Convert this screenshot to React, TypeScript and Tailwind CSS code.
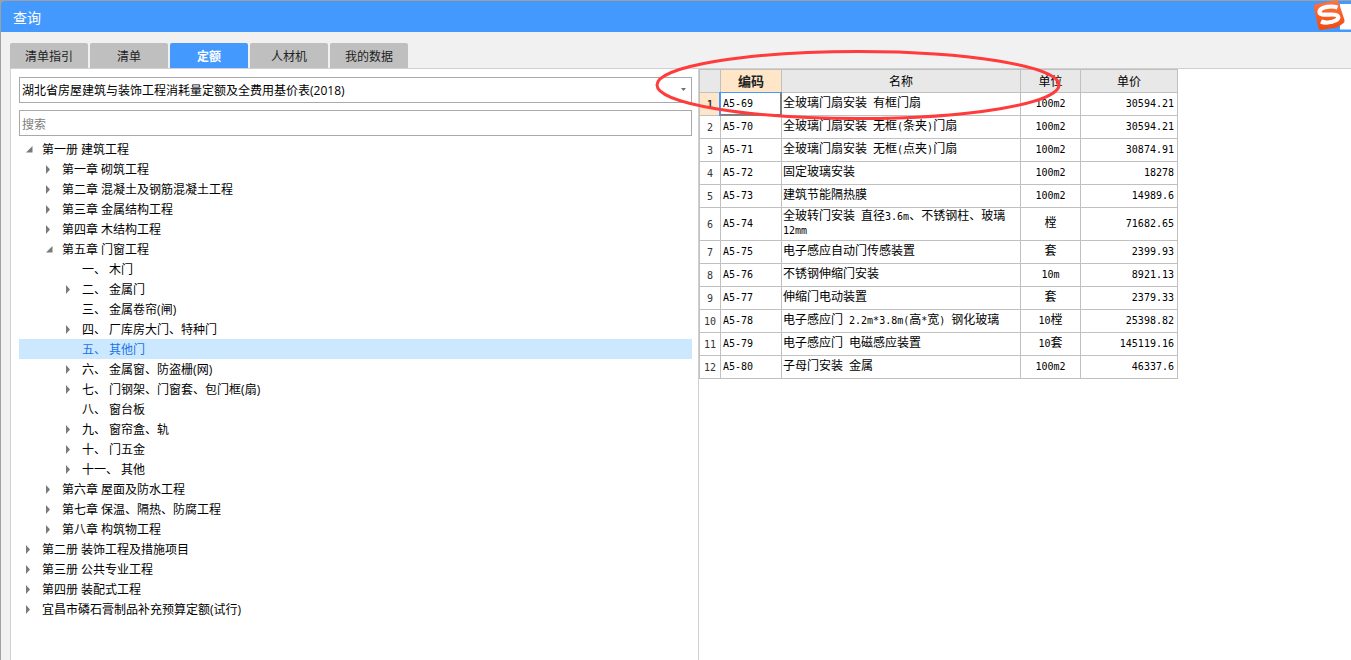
import { useState } from 'react'
import clsx from 'clsx'

type TreeItem = {
    label: string
    level: 0 | 1 | 2
    state: 'open' | 'closed' | 'leaf'
}

type PriceRow = {
    code: string
    name: string
    unit: string
    price: string
}

const TABS = ['清单指引', '清单', '定额', '人材机', '我的数据']

const TREE: TreeItem[] = [
    { label: '第一册 建筑工程', level: 0, state: 'open' },
    { label: '第一章 砌筑工程', level: 1, state: 'closed' },
    { label: '第二章 混凝土及钢筋混凝土工程', level: 1, state: 'closed' },
    { label: '第三章 金属结构工程', level: 1, state: 'closed' },
    { label: '第四章 木结构工程', level: 1, state: 'closed' },
    { label: '第五章 门窗工程', level: 1, state: 'open' },
    { label: '一、 木门', level: 2, state: 'leaf' },
    { label: '二、 金属门', level: 2, state: 'closed' },
    { label: '三、 金属卷帘(闸)', level: 2, state: 'leaf' },
    { label: '四、 厂库房大门、特种门', level: 2, state: 'closed' },
    { label: '五、 其他门', level: 2, state: 'leaf' },
    { label: '六、 金属窗、防盗栅(网)', level: 2, state: 'closed' },
    { label: '七、 门钢架、门窗套、包门框(扇)', level: 2, state: 'closed' },
    { label: '八、 窗台板', level: 2, state: 'leaf' },
    { label: '九、 窗帘盒、轨', level: 2, state: 'closed' },
    { label: '十、 门五金', level: 2, state: 'closed' },
    { label: '十一、 其他', level: 2, state: 'closed' },
    { label: '第六章 屋面及防水工程', level: 1, state: 'closed' },
    { label: '第七章 保温、隔热、防腐工程', level: 1, state: 'closed' },
    { label: '第八章 构筑物工程', level: 1, state: 'closed' },
    { label: '第二册 装饰工程及措施项目', level: 0, state: 'closed' },
    { label: '第三册 公共专业工程', level: 0, state: 'closed' },
    { label: '第四册 装配式工程', level: 0, state: 'closed' },
    { label: '宜昌市磷石膏制品补充预算定额(试行)', level: 0, state: 'closed' },
]

const ROWS: PriceRow[] = [
    { code: 'A5-69', name: '全玻璃门扇安装 有框门扇', unit: '100m2', price: '30594.21' },
    { code: 'A5-70', name: '全玻璃门扇安装 无框(条夹)门扇', unit: '100m2', price: '30594.21' },
    { code: 'A5-71', name: '全玻璃门扇安装 无框(点夹)门扇', unit: '100m2', price: '30874.91' },
    { code: 'A5-72', name: '固定玻璃安装', unit: '100m2', price: '18278' },
    { code: 'A5-73', name: '建筑节能隔热膜', unit: '100m2', price: '14989.6' },
    { code: 'A5-74', name: '全玻转门安装 直径3.6m、不锈钢柱、玻璃12mm', unit: '樘', price: '71682.65' },
    { code: 'A5-75', name: '电子感应自动门传感装置', unit: '套', price: '2399.93' },
    { code: 'A5-76', name: '不锈钢伸缩门安装', unit: '10m', price: '8921.13' },
    { code: 'A5-77', name: '伸缩门电动装置', unit: '套', price: '2379.33' },
    { code: 'A5-78', name: '电子感应门 2.2m*3.8m(高*宽) 钢化玻璃', unit: '10樘', price: '25398.82' },
    { code: 'A5-79', name: '电子感应门 电磁感应装置', unit: '10套', price: '145119.16' },
    { code: 'A5-80', name: '子母门安装 金属', unit: '100m2', price: '46337.6' },
]

const INDENT = ['pl-[5px]', 'pl-[25px]', 'pl-[45px]']

// Half-width characters are set in a smaller monospace so they take half a CJK cell
const GridText = ({ text }: { text: string }) => (
    <>
        {text.split(/([\x20-\x7e]+)/).filter(Boolean).map((part, i) =>
            /^[\x20-\x7e]/.test(part) ? (
                <span key={i} className="font-['DejaVu_Sans_Mono',monospace] text-[10px] leading-none">{part}</span>
            ) : (
                part
            )
        )}
    </>
)

const TreeArrow = ({ state }: { state: TreeItem['state'] }) => (
    <svg className="w-[18px] h-5 shrink-0" viewBox="0 0 18 20" fill="#7a7a7a" aria-hidden="true">
        {state === 'closed' && <path d="M2 6V15L6 10.5Z" />}
        {state === 'open' && <path d="M8.500 7V13.500H2Z" />}
    </svg>
)

const SogouLogo = () => (
    <svg className="w-[38px] h-8 block" viewBox="0 0 38 32" role="img" aria-label="S">
        <defs>
            <linearGradient id="logo" x1="0" y1="0" x2="0" y2="1">
                <stop offset="0" stopColor="#ff7340" />
                <stop offset="1" stopColor="#f04a10" />
            </linearGradient>
        </defs>
        <path d="M27 4H38V29.500H27Z" fill="#fff" />
        <path d="M3 4 23 0.5Q25 0 25.600 2L31.500 20Q32 22 30 23.500L24 27.500 8 30Q6 30.300 5.400 28L0.800 7.500Q0.500 4.500 3 4Z" fill="url(#logo)" />
        <path d="M24.500 7.500C19 5.500 7.500 6.500 6.500 11.500 6 16 14 14.500 19 14.500 26 14.500 27 18 22.500 20.500 18 23 11 23 8 21.500" fill="none" stroke="#fff" strokeWidth="4.200" />
    </svg>
)

const CategoryPanel = () => {
    const [selected, setSelected] = useState(10)
    const [keyword, setKeyword] = useState('')

    return (
        <section className="border-r border-[#d0d0d0] pl-2 pr-1.5 pt-2">
            <div className="relative">
                <select
                    aria-label="定额库"
                    className="block w-full h-[26px] appearance-none border border-[#a9a9a9] bg-white pl-0.5 pr-5 pt-0.5 text-xs text-black outline-none"
                >
                    <option>湖北省房屋建筑与装饰工程消耗量定额及全费用基价表(2018)</option>
                </select>
                <svg className="absolute right-1 top-2.5 w-2 h-1.5 pointer-events-none" viewBox="0 0 8 6" fill="#707070">
                    <path d="M1 1H6L3.500 4Z" />
                </svg>
            </div>
            <input
                type="text"
                aria-label="搜索"
                placeholder="搜索"
                value={keyword}
                onChange={(e) => setKeyword(e.target.value)}
                className="mt-[7px] block w-full h-[26px] border border-[#a9a9a9] bg-white px-0.5 pt-0.5 text-xs text-black placeholder:text-[#808080] outline-none"
            />
            <ul className="mt-[3px]">
                {TREE.map((item, i) => (
                    <li key={item.label}>
                        <button
                            type="button"
                            onClick={() => setSelected(i)}
                            className={clsx(
                                'flex w-full h-5 items-center text-left text-xs whitespace-nowrap',
                                INDENT[item.level],
                                i === selected ? 'bg-[#cce8ff] text-[#1a73e8]' : 'text-black'
                            )}
                        >
                            <TreeArrow state={item.state} />
                            <span className="pt-0.5">{item.label}</span>
                        </button>
                    </li>
                ))}
            </ul>
        </section>
    )
}

const PriceTable = () => {
    const head = 'h-[23px] border-r border-b border-[#c0c0c0] pt-0.5 font-normal'
    const cell = 'h-[23px] border-r border-b border-[#c0c0c0] pt-px pb-[3px]'

    return (
        <table className="w-[479px] table-fixed border-separate border-spacing-0 border-l border-t border-[#c0c0c0] bg-white text-xs leading-[14px] text-black">
            <colgroup>
                <col className="w-[21px]" />
                <col className="w-[61px]" />
                <col className="w-[239px]" />
                <col className="w-[60px]" />
                <col className="w-[97px]" />
            </colgroup>
            <thead>
                <tr className="bg-[#e8e8e8]">
                    <th className={head}></th>
                    <th className="h-[23px] border-r border-b border-[#c0c0c0] bg-[#ffe6c8] text-[13px] font-bold text-[#222]">编码</th>
                    <th className={head}>名称</th>
                    <th className={head}>单位</th>
                    <th className={head}>单价</th>
                </tr>
            </thead>
            <tbody>
                {ROWS.map((row, i) => (
                    <tr key={row.code}>
                        <th
                            scope="row"
                            className={clsx(
                                'h-[23px] border-r border-b border-[#c0c0c0] py-0.5 text-center text-[#333]',
                                i === 0 ? 'bg-[#ffe6c8] font-bold' : 'font-normal'
                            )}
                        >
                            <GridText text={String(i + 1)} />
                        </th>
                        <td className={clsx(cell, 'relative pl-0.5')}>
                            <GridText text={row.code} />
                            {i === 0 && (
                                <span className="absolute -top-px -left-0.5 -right-px -bottom-px border-t border-l-2 border-r-2 border-b-2 border-t-[#4499ff] border-l-[#4499ff] border-r-[#808080] border-b-[#808080]"></span>
                            )}
                        </td>
                        <td className={clsx(cell, 'pl-px pr-1')}>
                            <GridText text={row.name} />
                        </td>
                        <td className={clsx(cell, 'text-center')}>
                            <GridText text={row.unit} />
                        </td>
                        <td className={clsx(cell, 'text-right pr-[3px]')}>
                            <GridText text={row.price} />
                        </td>
                    </tr>
                ))}
            </tbody>
        </table>
    )
}

export default function App() {
    const [tab, setTab] = useState('定额')

    return (
        <div className="flex min-h-screen flex-col bg-[#a0a0a0] pl-px pt-px font-['Open_Sans','Noto_Sans_CJK_SC',sans-serif]">
            <header className="relative flex h-[31px] items-center rounded-tl bg-[#4499ff] pl-3">
                <h1 className="pt-0.5 text-sm text-white">查询</h1>
                <div className="absolute right-0 -top-px">
                    <SogouLogo />
                </div>
            </header>

            <main className="flex flex-1 flex-col bg-[#f1f1f1] pl-[9px] pt-[11px]">
                <nav className="flex gap-0.5">
                    {TABS.map((name) => (
                        <button
                            key={name}
                            type="button"
                            onClick={() => setTab(name)}
                            className={clsx(
                                'h-[25px] w-[78px] rounded-t-xs pt-0.5 text-xs',
                                name === tab ? 'bg-[#4499ff] font-bold text-white' : 'bg-[#bfbfbf] text-[#222]'
                            )}
                        >
                            {name}
                        </button>
                    ))}
                </nav>

                <div className="grid flex-1 grid-cols-[688fr_652fr] border-l border-t border-[#d0d0d0] bg-white">
                    <CategoryPanel />
                    <section className="relative">
                        <PriceTable />
                        {/* Hand-drawn callout around the selected row */}
                        <svg
                            className="absolute -left-[45px] -top-5 h-[72px] w-[408px] pointer-events-none"
                            viewBox="0 0 408 72"
                            fill="none"
                        >
                            <ellipse cx="204" cy="36" rx="201" ry="33.500" stroke="#ff3b3b" strokeWidth="3" />
                        </svg>
                    </section>
                </div>
            </main>
        </div>
    )
}
